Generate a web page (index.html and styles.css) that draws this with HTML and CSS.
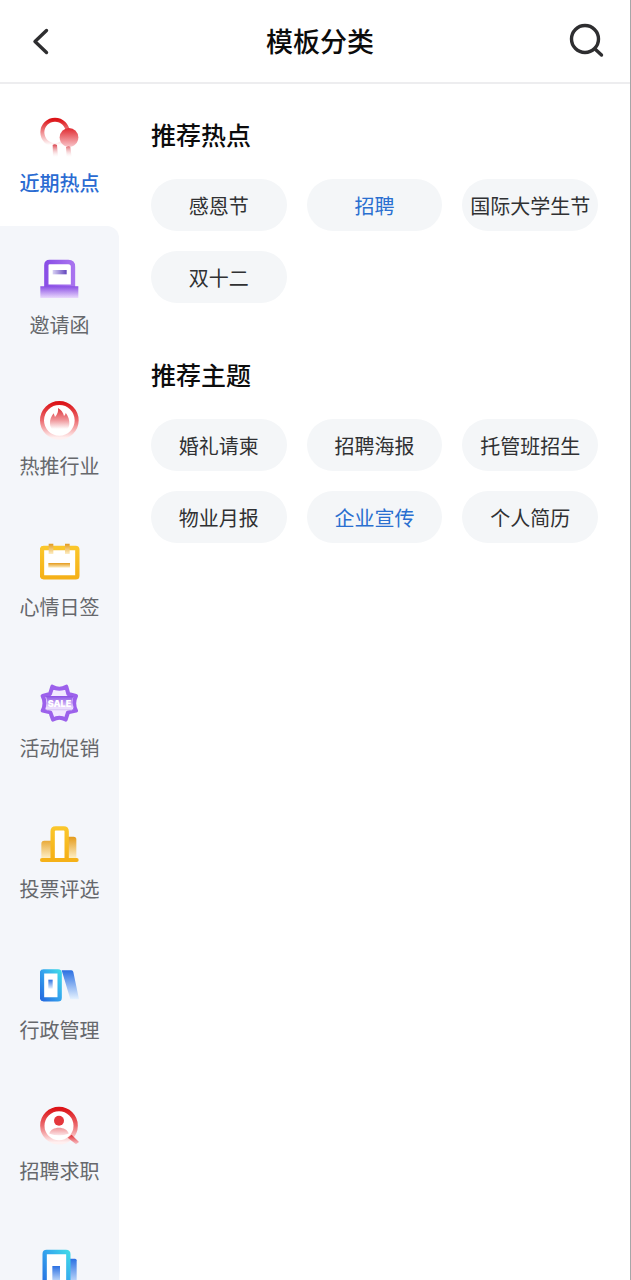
FILE: index.html
```
<!DOCTYPE html>
<html lang="zh-CN">
<head>
<meta charset="utf-8">
<meta name="viewport" content="width=device-width, initial-scale=1">
<title>模板分类</title>
<link rel="stylesheet" href="styles.css">
</head>
<body>
<div class="app">
  <header class="topbar">
    <button class="back" type="button" aria-label="返回">
      <svg width="28" height="32" viewBox="0 0 28 32" fill="none" stroke="#2e2e30" stroke-width="3.400" stroke-linecap="round" stroke-linejoin="round"><path d="M22.500 5.500 11 16.500l11.500 11"/></svg>
    </button>
    <h1 class="title">模板分类</h1>
    <button class="search" type="button" aria-label="搜索">
      <svg width="36" height="36" viewBox="0 0 36 36" fill="none" stroke="#2e2e30" stroke-width="3.400" stroke-linecap="round"><circle cx="17" cy="16" r="13.500"/><path d="m27 26 6.500 6"/></svg>
    </button>
  </header>
  <div class="body">
    <nav class="sidebar" aria-label="分类">
      <a class="item active" href="#hot" aria-current="page">
        <svg class="icon" viewBox="59 34 120 126">
          <defs>
            <linearGradient id="r1" x1="0" y1="0" x2="0" y2="1"><stop offset="0" stop-color="#dc1418"/><stop offset=".5" stop-color="#ec6c70"/><stop offset="1" stop-color="#fff0f0"/></linearGradient>
            <linearGradient id="r2" x1="0" y1="0" x2="0" y2="1"><stop offset="0" stop-color="#e02a30"/><stop offset="1" stop-color="#f9c6cb"/></linearGradient>
            <linearGradient id="r3" x1="0" y1="0" x2="0" y2="1"><stop offset="0" stop-color="#d83a44"/><stop offset="1" stop-color="#fff" stop-opacity=".2"/></linearGradient>
            <linearGradient id="ring" x1="0" y1="0" x2="0" y2="1"><stop offset="0" stop-color="#dc1418"/><stop offset=".5" stop-color="#f08d90"/><stop offset="1" stop-color="#fff"/></linearGradient>
          </defs>
          <circle cx="104" cy="83" r="38" fill="none" stroke="url(#ring)" stroke-width="12"/>
          <path d="M146 70a28 28 0 0 1 28 28c0 18-14 29-28 29s-28-11-28-29a28 28 0 0 1 28-28Z" fill="url(#r2)"/>
          <path d="M97 121q6-5 13 0l3 36H98ZM137 127q8-4 13 0l4 30h-15Z" fill="url(#r3)"/>
        </svg>
        <span class="label">近期热点</span>
      </a>
      <a class="item" href="#invite">
        <svg class="icon" viewBox="59 24 120 126">
          <defs>
            <linearGradient id="p1" x1="0" y1="0" x2="1" y2="0"><stop offset="0" stop-color="#8a4fe6"/><stop offset="1" stop-color="#a873ef"/></linearGradient>
            <linearGradient id="p2" x1="0" y1="0" x2="0" y2="1"><stop offset="0" stop-color="#8b50e4"/><stop offset="1" stop-color="#ead9fd"/></linearGradient>
            <linearGradient id="p3" x1="0" y1="0" x2="1" y2="0"><stop offset="0" stop-color="#d9d2f4"/><stop offset="1" stop-color="#6245bd"/></linearGradient>
          </defs>
          <path d="M78 110V46q0-10 10-10h56q14 0 14 14v60Z" fill="#fff" stroke="url(#p1)" stroke-width="13"/>
          <path d="M60 109h114v35H60Z" fill="url(#p2)"/>
          <path d="M97 60h42v13H97Z" fill="url(#p3)"/>
        </svg>
        <span class="label">邀请函</span>
      </a>
      <a class="item" href="#industry">
        <svg class="icon" viewBox="59 26 120 126">
          <defs><linearGradient id="flame" x1="0" y1="0" x2="0" y2="1"><stop offset="0" stop-color="#dd3338"/><stop offset=".5" stop-color="#f0999d"/><stop offset=".85" stop-color="#fff"/></linearGradient></defs>
          <circle cx="117" cy="90" r="52" fill="#fff" stroke="url(#r1)" stroke-width="12"/>
          <path d="M113 53c9 6 16 13 18 24 3-3 5-6 5-10 8 11 12 22 11 34-1 14-11 25-28 26-18 0-29-11-30-27-1-12 4-22 11-31l4 11c7-7 11-17 9-27Z" fill="url(#flame)"/>
        </svg>
        <span class="label">热推行业</span>
      </a>
      <a class="item" href="#daily">
        <svg class="icon" viewBox="59 25 120 126">
          <defs>
            <linearGradient id="y1" x1="0" y1="0" x2="0" y2="1"><stop offset="0" stop-color="#fac62b"/><stop offset="1" stop-color="#f5b118"/></linearGradient>
            <linearGradient id="y2" x1="0" y1="0" x2="0" y2="1"><stop offset="0" stop-color="#e49a1a"/><stop offset="1" stop-color="#fdeec4"/></linearGradient>
          </defs>
          <rect x="65" y="49" width="106" height="88" rx="5" fill="#fff" stroke="url(#y1)" stroke-width="13"/>
          <path d="M85 36h14v31H85ZM134 36h14v31h-14Z" fill="url(#y2)"/>
          <path d="M84 94h65v14H84Z" fill="url(#y2)"/>
        </svg>
        <span class="label">心情日签</span>
      </a>
      <a class="item" href="#sale">
        <svg class="icon" viewBox="59 24 120 126">
          <path d="M96 41q21 12 42 0l6 22 23 6q-11 21 0 44l-24 5-7 22q-19-12-38 0l-8-22-23-5q11-23 0-44l22-6Z" fill="#f1e8ff" stroke="#9c61eb" stroke-width="12" stroke-linejoin="round"/>
          <path d="M77 69h82l-4 15 5 20H76l4-18Z" fill="url(#p2)"/>
          <path d="M79 107h76v5H79Z" fill="#dccaf7"/>
          <text x="82" y="101" class="sale">SALE</text>
        </svg>
        <span class="label">活动促销</span>
      </a>
      <a class="item" href="#vote">
        <svg class="icon" viewBox="59 22 120 126">
          <path d="M63 130V87q0-9 9-9h22v52ZM138 130V66h22q8 0 8 8v56Z" fill="url(#y2)"/>
          <path d="M97 130V50q0-9 9-9h24q9 0 9 9v80" fill="#fff" stroke="url(#y1)" stroke-width="13"/>
          <path d="M65 136h104" stroke="#f5b118" stroke-width="12" stroke-linecap="round"/>
        </svg>
        <span class="label">投票评选</span>
      </a>
      <a class="item" href="#admin">
        <svg class="icon" viewBox="59 22 120 126">
          <defs>
            <linearGradient id="b1" x1="1" y1="0" x2="0" y2="1"><stop offset="0" stop-color="#3fd7e8"/><stop offset=".45" stop-color="#35a7ee"/><stop offset="1" stop-color="#256ce0"/></linearGradient>
            <linearGradient id="b2" x1="0" y1="0" x2="0" y2="1"><stop offset="0" stop-color="#2b70e2"/><stop offset="1" stop-color="#e6f2ff"/></linearGradient>
          </defs>
          <rect x="65" y="47" width="53" height="84" rx="5" fill="#fff" stroke="url(#b1)" stroke-width="13"/>
          <path d="M84 72h13v27H84Z" fill="url(#b2)"/>
          <path d="M124 44h29q5 0 6 5l17 82h-26Z" fill="url(#b2)"/>
        </svg>
        <span class="label">行政管理</span>
      </a>
      <a class="item" href="#jobs">
        <svg class="icon" viewBox="59 23 120 126">
          <circle cx="116" cy="88" r="50" fill="#fff" stroke="url(#r1)" stroke-width="13"/>
          <circle cx="116" cy="73" r="15" fill="#e4373c"/>
          <path d="M87 112c4-24 53-24 58 0q-29 9-58 0Z" fill="url(#r2)" opacity=".5"/>
          <path d="m142 124 12-9 22 22-9 7Z" fill="url(#r2)"/>
        </svg>
        <span class="label">招聘求职</span>
      </a>
      <a class="item" href="#company" aria-label="企业">
        <svg class="icon" viewBox="59 33 120 126">
          <path d="M146 74h18q5 0 5 5v82h-23Z" fill="url(#b2)"/>
          <path d="M73 161V60q0-6 6-6h58q7 0 7 7v100" fill="#fff" stroke="url(#b1)" stroke-width="13"/>
          <path d="M96 96h23v56H96Z" fill="url(#b2)"/>
        </svg>
      </a>
    </nav>
    <main class="content">
      <section class="group">
        <h2 class="heading">推荐热点</h2>
        <div class="tags">
          <button class="tag" type="button">感恩节</button>
          <button class="tag on" type="button">招聘</button>
          <button class="tag" type="button">国际大学生节</button>
          <button class="tag" type="button">双十二</button>
        </div>
      </section>
      <section class="group">
        <h2 class="heading">推荐主题</h2>
        <div class="tags">
          <button class="tag" type="button">婚礼请柬</button>
          <button class="tag" type="button">招聘海报</button>
          <button class="tag" type="button">托管班招生</button>
          <button class="tag" type="button">物业月报</button>
          <button class="tag on" type="button">企业宣传</button>
          <button class="tag" type="button">个人简历</button>
        </div>
      </section>
    </main>
  </div>
</div>
</body>
</html>
```
FILE: styles.css
```
* {
  box-sizing: border-box;
}

body {
  margin: 0;
  background: #fff;
  color: #0c0c0c;
  font-family: "Noto Sans CJK SC", sans-serif;
}

button {
  border: 0;
  padding: 0;
  background: none;
  font: inherit;
  color: inherit;
  cursor: pointer;
}

.app {
  display: flex;
  flex-direction: column;
  height: 100vh;
  border-right: 1px solid #a6a6a8;
}

.topbar {
  flex: none;
  display: flex;
  align-items: center;
  justify-content: space-between;
  height: 84px;
  padding: 0 26px 0 24px;
  border-bottom: 2px solid #ededef;
}

.back,
.search {
  display: flex;
  align-items: center;
  height: 48px;
}

.back {
  width: 48px;
}

.title {
  margin: 0;
  font-size: 27px;
  line-height: 40px;
  font-weight: 500;
}

.body {
  flex: 1;
  min-height: 0;
  display: flex;
}

.sidebar {
  flex: none;
  width: 119px;
  overflow-y: auto;
  scrollbar-width: none;
}

.item {
  display: flex;
  flex-direction: column;
  align-items: center;
  gap: 11px;
  height: 141px;
  padding-top: 32px;
  background: #f4f6fa;
  color: #66686c;
  text-decoration: none;
}

.item.active {
  height: 142px;
  background: #fff;
  color: #2a6bd2;
  font-weight: 500;
}

.item.active + .item {
  border-top-right-radius: 12px;
}

.icon {
  width: 40px;
  height: 42px;
}

.label {
  font-size: 20px;
  line-height: 28px;
}

.sale {
  font: 900 27px Inter, sans-serif;
  fill: #fff;
}

.content {
  flex: 1;
  min-width: 0;
  padding: 32px;
  overflow-y: auto;
}

.group + .group {
  margin-top: 53px;
}

.heading {
  margin: 0 0 27px;
  font-size: 25px;
  line-height: 36px;
  font-weight: 500;
}

.tags {
  display: grid;
  grid-template-columns: repeat(3, 1fr);
  gap: 20px;
}

.tag {
  height: 52px;
  border-radius: 26px;
  background: #f4f6f8;
  color: #303133;
  font-size: 20px;
  white-space: nowrap;
}

.tag.on {
  color: #2a6fd0;
}
```
